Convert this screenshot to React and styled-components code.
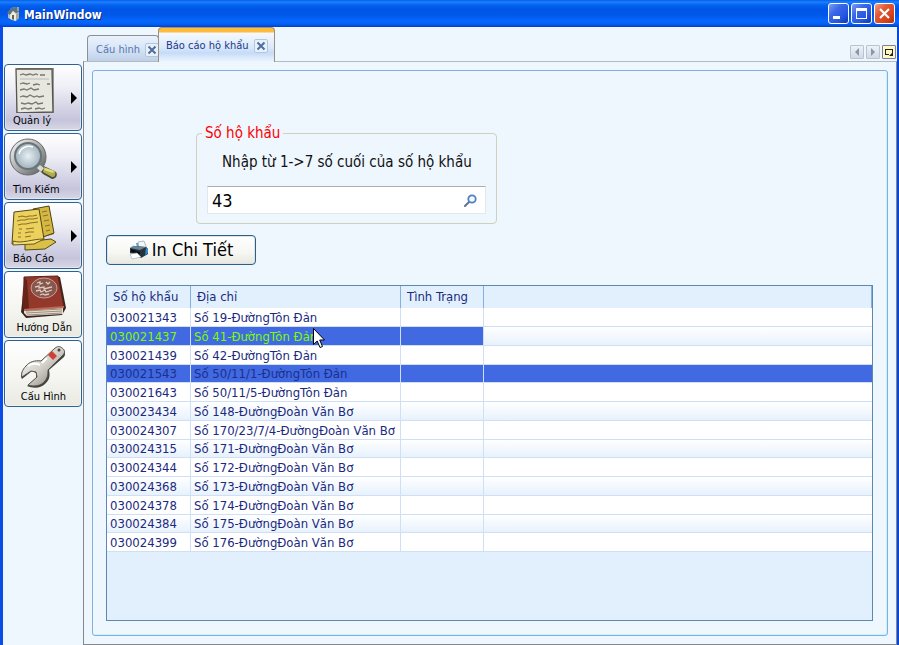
import React, { useState } from "react";
import styled, { createGlobalStyle, css } from "styled-components";

const GlobalStyle = createGlobalStyle`
  *, *::before, *::after { box-sizing: border-box; }
  body { margin: 0; background: #eef6fe; }
  body, button, input {
    font-family: "DejaVu Sans Condensed", Tahoma, "Noto Sans", sans-serif;
    font-size: 13px;
  }
  button, input { margin: 0; padding: 0; }
  svg { display: block; flex: none; }
`;

const Window = styled.div`
  min-height: 100vh;
  display: flex;
  flex-direction: column;
`;

const TitleBar = styled.header`
  height: 27px;
  flex: none;
  display: flex;
  align-items: center;
  gap: 4px;
  padding: 0 4px 0 7px;
  background: linear-gradient(#0a5ce8 0, #1a80ff 2px, #0463f0 5px, #0055e5 9px, #0058ea 15px, #0568fc 21px, #0660f4 24px, #0140c8 27px);
`;

const Title = styled.h1`
  flex: 1;
  margin: 0;
  padding-top: 2px;
  font-size: 12px;
  line-height: 16px;
  font-weight: 700;
  color: #fff;
  text-shadow: 1px 1px 0 #0a2a80;
`;

const Captions = styled.div`
  display: flex;
  gap: 2px;
`;

const CaptionButton = styled.button`
  width: 21px;
  height: 21px;
  border: 1px solid #fff;
  border-radius: 3px;
  background: ${(p) =>
    p.$close
      ? "linear-gradient(135deg, #f0a088 0, #e25a34 35%, #d8441c 70%, #b03010 100%)"
      : "linear-gradient(135deg, #7c9cf4 0, #3a68e8 35%, #2456e0 70%, #1038b0 100%)"};
`;

const Frame = styled.div`
  flex: 1;
  display: flex;
  border: solid #0446e0;
  border-width: 0 2px 0 3px;
  border-left-color: #0a4ce8;
  background: #eef6fe;
`;

const Sidebar = styled.nav`
  width: 80px;
  flex: none;
  display: flex;
  flex-direction: column;
  gap: 2px;
  padding: 37px 1px 0;
`;

const NavButton = styled.button`
  height: 67px;
  display: grid;
  grid-template-columns: 1fr 6px;
  grid-template-rows: 47px 16px;
  align-items: center;
  padding: 1px 4px;
  border: 1px solid #2f6290;
  border-radius: 4px;
  color: #000;
  font-size: 11px;
  line-height: 16px;
  text-align: left;
  background: ${(p) =>
    p.$menu
      ? "linear-gradient(#fff 0, #eeeef6 35%, #c5c4dc 85%, #d8d8e4 100%)"
      : "linear-gradient(#fff 0, #f4f4f0 60%, #eaeae2 100%)"};
  box-shadow: inset 0 0 0 1px rgba(255, 255, 255, 0.4);
`;

const NavIcon = styled.span`
  grid-row: 1;
  display: flex;
  justify-content: ${(p) => (p.$wide ? "center" : "flex-start")};
  grid-column: ${(p) => (p.$wide ? "1 / 3" : "1")};
`;

const NavArrow = styled.span`
  grid-row: 1 / 3;
  grid-column: 2;
`;

const NavLabel = styled.span`
  grid-row: 2;
  grid-column: ${(p) => (p.$wide ? "1 / 3" : "1")};
  padding: ${(p) => (p.$wide ? `0 ${p.$inset}px 0 0` : "0 0 0 4px")};
  text-align: ${(p) => (p.$wide ? "right" : "left")};
  white-space: nowrap;
`;

const Workspace = styled.main`
  flex: 1;
  min-width: 0;
  display: flex;
  flex-direction: column;
`;

const TabStrip = styled.div`
  height: 35px;
  display: flex;
  align-items: flex-end;
  padding-left: 4px;
`;

const Tab = styled.div`
  display: flex;
  align-items: center;
  gap: 5px;
  border: 1px solid #8c8f94;
  border-bottom: 0;
  border-radius: 4px 4px 0 0;
  ${(p) =>
    p.$active
      ? css`
          height: 35px;
          width: 117px;
          padding: 4px 7px 2px;
          color: #1a3a8c;
          border-color: #9a8f80;
          background: linear-gradient(#ffbb3c 0, #ffbb3c 4px, #f4f9ff 5px, #dce9fa 19px, #c6dbf8 25px, #eef6fe 34px);
          z-index: 1;
        `
      : css`
          height: 27px;
          width: 72px;
          margin-right: -1px;
          padding: 1px 1px 0 8px;
          color: #5577ae;
          background: linear-gradient(#eaf2fc 0, #dce8f8 40%, #bccfe8 100%);
        `}
`;

const TabLabel = styled.span`
  flex: 1;
  font-size: 11px;
  line-height: 16px;
  white-space: nowrap;
`;

const TabClose = styled.button`
  width: 14px;
  height: 14px;
  flex: none;
  display: grid;
  place-items: center;
  border: 1px solid #b4c6dc;
  border-radius: 2px;
  background: #e8f1fb;
`;

const StripTools = styled.div`
  margin-left: auto;
  display: flex;
  gap: 2px;
  padding: 0 1px 3px 0;
`;

const StripButton = styled.button`
  width: 14px;
  height: 14px;
  display: grid;
  place-items: center;
  border: 1px solid ${(p) => (p.$hot ? "#7480a8" : "#b8c4d4")};
  border-radius: 1px;
  background: ${(p) => (p.$hot ? "#fff8c4" : "linear-gradient(#eef2f8, #d2dae4)")};
`;

const TabPanel = styled.section`
  flex: 1;
  display: flex;
  margin-top: -1px;
  padding: 8px;
  border: 1px solid #85888c;
  border-top-color: #b4bac2;
`;

const Report = styled.div`
  flex: 1;
  min-width: 0;
  display: flex;
  flex-direction: column;
  align-items: flex-start;
  padding: 53px 14px 14px 13px;
  border: 1px solid #82aee0;
  border-radius: 3px;
  box-shadow: inset -1px -1px 0 #c4f4fc;
`;

const SearchGroup = styled.fieldset`
  width: 301px;
  height: 100px;
  margin: 0 0 11px 90px;
  padding: 9px 10px;
  border: 1px solid #d0d0bf;
  border-radius: 4px;
`;

const Legend = styled.legend`
  margin-left: -5px;
  padding: 0 3px;
  font-size: 15px;
  line-height: 18px;
  color: #f00;
`;

const SearchLabel = styled.label`
  display: block;
  height: 35px;
  padding-left: 15px;
  font-size: 15px;
  line-height: 22px;
  white-space: nowrap;
  color: #101010;
`;

const SearchBox = styled.div`
  height: 28px;
  display: flex;
  align-items: center;
  padding-right: 8px;
  border: 1px solid #e2e9ee;
  border-top-color: #abadb3;
  background: #fff;
`;

const SearchInput = styled.input`
  flex: 1;
  min-width: 0;
  height: 26px;
  padding: 0 4px;
  border: 0;
  outline: 0;
  background: none;
  color: #000;
  font-size: 18px;
`;

const SearchButton = styled.button`
  border: 0;
  background: none;
`;

const PrintButton = styled.button`
  width: 150px;
  height: 30px;
  display: flex;
  align-items: center;
  justify-content: center;
  gap: 3px;
  margin-bottom: 20px;
  border: 1px solid #2c6088;
  border-radius: 4px;
  background: linear-gradient(#fff, #f6f6f2 60%, #e8e8e0);
  box-shadow: inset 0 0 0 1px #dce4e8;
  color: #000;
  font-size: 18px;
  line-height: 24px;
`;

const GridView = styled.div`
  flex: 1;
  align-self: stretch;
  border: 1px solid #5c88b4;
  background: #e2f0fd;
`;

const Table = styled.table`
  width: 100%;
  table-layout: fixed;
  border-collapse: separate;
  border-spacing: 0;
  color: #1b2a80;
`;

const HeadCell = styled.th`
  width: ${(p) => (p.$width ? `${p.$width}px` : "auto")};
  height: 22px;
  padding: 0 6px;
  border-right: 1px solid #84b0e0;
  font-weight: 400;
  line-height: 16px;
  text-align: left;
  white-space: nowrap;
  background: #e2f0fd;
`;

const Row = styled.tr`
  height: 19px;
  background: #fff;
  &:nth-child(4n) { height: 18px; }
  &:nth-child(even) { background: linear-gradient(#fff, #e6f1fc); }
`;

const Cell = styled.td`
  position: relative;
  padding: 0 3px;
  border: solid #cfdff5;
  border-width: 0 1px 1px 0;
  line-height: 17px;
  white-space: nowrap;
  color: ${(p) => (p.$hover ? "#7cfc00" : p.$selected ? "#1c2f8c" : "#1b2a80")};
  background: ${(p) => (p.$selected || p.$hover ? "#4169e1" : "none")};
  background-clip: padding-box;
  &:last-child { border-right: 0; }
`;

const Pointer = styled.svg`
  position: absolute;
  left: 122px;
  top: 1px;
  z-index: 2;
  pointer-events: none;
`;

function HouseIcon() {
  return (
    <svg width="13" height="16" viewBox="0 0 13 16">
      <path d="M1 8 4 2 9 1 12 6V12L8 15 1 12Z" fill="#b7b9b5" />
      <path d="M0 7 4 2 9 1 12 6 9 7 6 5 3 9Z" fill="#587486" />
      <path d="M3 9 6 5 9 8V15L3 13Z" fill="#ece9df" />
      <path d="M9 8 12 7V12L9 15Z" fill="#a9a797" />
      <path d="M5 9H7V14L5 13Z" fill="#606458" />
      <path d="M10 1H12V5H10Z" fill="#9ba09f" />
    </svg>
  );
}

function NoteIcon() {
  return (
    <svg width="46" height="46" viewBox="0 0 46 46">
      <path d="M8 1H45V46L7 47Z" fill="#9a9a94" />
      <path d="M7 2H43L44 45 8 46Z" fill="#e7e7df" stroke="#56564f" strokeWidth="1.3" />
      <g fill="none" stroke="#77776f" strokeWidth="1.3">
        <path d="m11 8 3-1 3 1 4-1 3 1 3-1 2 1M31 8h5" />
        <path d="M11 12h29" strokeWidth=".7" stroke="#aaa" />
        <path d="m11 17 3-1 4 1 3-1M24 18l4-1 3 1M38 17h3" />
        <path d="m11 23 4-1 3 1 4-2 3 2 5-1" />
        <path d="m11 30 3-1 4 1 3-2 4 2 3-1 2 1 5-1" />
        <path d="m12 36 4 1 3-1 4 1 4-2 2 2 5-1" />
        <path d="m12 42 4-1 3 1 4-1M26 42l4-1 3 1 3-1" />
      </g>
    </svg>
  );
}

function MagnifierIcon() {
  return (
    <svg width="50" height="46" viewBox="0 0 50 46">
      <defs>
        <linearGradient id="rim" x1="0" y1="0" x2="1" y2="1">
          <stop stopColor="#fff" />
          <stop offset=".55" stopColor="#a1a5a4" />
          <stop offset="1" stopColor="#505755" />
        </linearGradient>
        <radialGradient id="lens">
          <stop stopColor="#e6eff4" />
          <stop offset="1" stopColor="#a2b2bc" />
        </radialGradient>
      </defs>
      <path d="m30 28 9 4 8 4c2 3 0 7-4 7l-9-5-7-7Z" fill="#464a36" />
      <path d="m35 31 11 4c1 4 0 6-3 6l-9-5Z" fill="#b1ad4e" />
      <path d="m36 32 9 3-1 2-9-3Z" fill="#e1dd82" />
      <ellipse cx="19" cy="21" rx="18" ry="18" fill="url(#rim)" stroke="#676b6b" />
      <ellipse cx="19" cy="20" rx="13" ry="13" fill="url(#lens)" stroke="#68747a" strokeWidth="2" />
      <path d="M10 18c1-6 8-9 14-7" stroke="#fff" strokeWidth="1.5" fill="none" />
      <path d="m31 29 4 3-3 4-4-4Z" fill="#d6d9d5" />
    </svg>
  );
}

function StickyNotesIcon() {
  return (
    <svg width="50" height="46" viewBox="0 0 50 46">
      <path d="m25 5 15-4 5 28-14 4Z" fill="#655519" />
      <path d="m24 4 16-3 5 27-14 5Z" fill="#d5b842" stroke="#53461d" />
      <path d="m16 37 26-3 5 3-11 7-20 1Z" fill="#dbc047" stroke="#514719" />
      <path d="m5 7 25-3 5 30-9 3-23 2Z" fill="#ecd15c" stroke="#514719" />
      <path d="M4 36c10 3 18-2 31-2l-10 5L4 40Z" fill="#f5df73" stroke="#675720" />
      <g fill="none" stroke="#897328" strokeWidth="1.2">
        <path d="m9 12 4-1 4 1 3-1 4 0 4-1M8 16l4-1 4 0 3-1 5 0 5-1M9 20l4-1 4 0 4-1 8-1" />
        <path d="M10 24h3M17 24l8-1M9 28h3M16 28l4-1 5 0M9 32h3M16 32l6-1" />
        <path d="m33 7 5-1M34 11l5-1M35 16l5-1M36 21l5-1M37 26l4-1" />
      </g>
    </svg>
  );
}

function BookIcon() {
  return (
    <svg width="48" height="46" viewBox="0 0 48 46">
      <path d="m6 4 35-1 6 31-4 7-36 3-5-6Z" fill="#39241f" />
      <path d="m5 35 39-2v7L8 42l-3-3Z" fill="#e5dfd1" />
      <path d="m7 37 36-2M7 39l36-2M8 41l35-2" stroke="#9a9180" />
      <path d="m5 3 34-1 6 31-39 3Z" fill="#93392c" stroke="#572219" />
      <path d="m5 3 3 3 2 28-5 3c-3-8-1-18 0-34Z" fill="#652519" />
      <path d="m5 36 40-3" stroke="#bd6955" strokeWidth="2" />
      <ellipse cx="25" cy="14" rx="13" ry="10" fill="#84584f" stroke="#d09c8e" />
      <g fill="none" stroke="#e0c8bb" strokeWidth="1.3">
        <path d="m18 9 3-1v2l3-1M27 8l2 2 2-2" />
        <path d="m16 13 4-1v2l5-1v2l8-2M17 17l4-1 1 2 4-2 1 2 6-2M21 21l3-1 2 1 4-1" />
      </g>
    </svg>
  );
}

function WrenchIcon() {
  return (
    <svg width="48" height="46" viewBox="0 0 48 46">
      <defs>
        <linearGradient id="steel" x1="0" y1="0" x2="1" y2="1">
          <stop stopColor="#fff" />
          <stop offset=".5" stopColor="#d2d0c8" />
          <stop offset="1" stopColor="#77736b" />
        </linearGradient>
      </defs>
      <path d="M44 7c-2-2-5-2-8 1L22 20c-5-1-12 1-15 5-5 4-6 8-4 11l10-8 4 2v5l-9 8c7 3 15 2 19-3 4-4 4-8 3-13L45 14c2-3 1-6-1-7Z" fill="#45423d" />
      <path d="M43 5c-2-2-5-2-8 1L22 18c-6-1-12 1-15 5-4 4-5 8-4 11l9-6 5 1 1 5-9 8c6 2 13 1 17-4 3-4 3-7 3-11L44 12c3-3 1-6-1-7Z" fill="url(#steel)" stroke="#55514b" />
      <path d="m33 8 5 5-4 4-5-5Z" fill="#cf4138" />
      <circle cx="40" cy="7" r="1.5" fill="#44413c" />
      <path d="m23 20 5-5M9 23c4-3 8-3 12-1" stroke="#fff" strokeWidth="2" fill="none" />
    </svg>
  );
}

function PrinterIcon() {
  return (
    <svg width="20" height="20" viewBox="0 0 20 20">
      <path d="m9 2 6-1 3 8-8 2Z" fill="#f4f7fa" stroke="#9ca9b3" strokeWidth=".8" />
      <path d="M7 3h2l2 8H9Z" fill="#46aae0" />
      <path d="m1 8 5-2 11 1 2 2v5l-7 4L1 13Z" fill="#26333b" />
      <path d="m1 8 5-2 11 1-6 3Z" fill="#70838e" />
      <path d="m2 9 9 3v2L2 12Z" fill="#080f15" />
      <path d="m17 8 2 1v4l-3 2Z" fill="#2493d4" />
      <path d="m1 14 7-1 4 4-9 2Z" fill="#fff" stroke="#a8b4bd" strokeWidth=".7" />
      <path d="M5 5 1 8l3-1Z" fill="#42a5d8" />
    </svg>
  );
}

function SearchIcon() {
  return (
    <svg width="13" height="13" viewBox="0 0 13 13" fill="none">
      <path d="m1 12 4-4" stroke="#5d7193" strokeWidth="2" strokeLinecap="round" />
      <circle cx="8" cy="5" r="3.7" stroke="#4f82c4" strokeWidth="1.8" fill="#f1f8ff" />
    </svg>
  );
}

function CrossIcon() {
  return (
    <svg width="10" height="10" viewBox="0 0 10 10" fill="none">
      <path d="m1.500 1.500 7 7M8.500 1.500l-7 7" stroke="#4d6f9e" strokeWidth="2" />
    </svg>
  );
}

function MenuArrow() {
  return (
    <svg width="6" height="12" viewBox="0 0 6 12">
      <path d="M0 0v12l6-6Z" fill="#000" />
    </svg>
  );
}

const navItems = [
  { label: "Quản lý", Icon: NoteIcon, menu: true },
  { label: "Tìm Kiếm", Icon: MagnifierIcon, menu: true },
  { label: "Báo Cáo", Icon: StickyNotesIcon, menu: true },
  { label: "Hướng Dẫn", Icon: BookIcon, inset: 5 },
  { label: "Cấu Hình", Icon: WrenchIcon, inset: 11 },
];

const records = [
  ["030021343", "Số 19-ĐườngTôn Đản"],
  ["030021437", "Số 41-ĐườngTôn Đản"],
  ["030021439", "Số 42-ĐườngTôn Đản"],
  ["030021543", "Số 50/11/1-ĐườngTôn Đản"],
  ["030021643", "Số 50/11/5-ĐườngTôn Đản"],
  ["030023434", "Số 148-ĐườngĐoàn Văn Bơ"],
  ["030024307", "Số 170/23/7/4-ĐườngĐoàn Văn Bơ"],
  ["030024315", "Số 171-ĐườngĐoàn Văn Bơ"],
  ["030024344", "Số 172-ĐườngĐoàn Văn Bơ"],
  ["030024368", "Số 173-ĐườngĐoàn Văn Bơ"],
  ["030024378", "Số 174-ĐườngĐoàn Văn Bơ"],
  ["030024384", "Số 175-ĐườngĐoàn Văn Bơ"],
  ["030024399", "Số 176-ĐườngĐoàn Văn Bơ"],
];

const hoveredId = "030021437";

export default function App() {
  const [query, setQuery] = useState("43");
  const [selectedId, setSelectedId] = useState("030021543");

  return (
    <Window>
      <GlobalStyle />
      <TitleBar>
        <HouseIcon />
        <Title>MainWindow</Title>
        <Captions>
          <CaptionButton aria-label="Minimize">
            <svg width="19" height="19" viewBox="0 0 19 19">
              <path d="M4 12h7v3H4Z" fill="#fff" />
            </svg>
          </CaptionButton>
          <CaptionButton aria-label="Maximize">
            <svg width="19" height="19" viewBox="0 0 19 19">
              <path d="M4 4h11v11H4ZM5 7v7h9V7Z" fill="#fff" fillRule="evenodd" />
            </svg>
          </CaptionButton>
          <CaptionButton $close aria-label="Close">
            <svg width="19" height="19" viewBox="0 0 19 19">
              <path d="m5 5 9 9M14 5l-9 9" stroke="#fff" strokeWidth="2.2" />
            </svg>
          </CaptionButton>
        </Captions>
      </TitleBar>

      <Frame>
        <Sidebar>
          {navItems.map(({ label, Icon, menu, inset }) => (
            <NavButton key={label} $menu={menu}>
              <NavIcon $wide={!menu}>
                <Icon />
              </NavIcon>
              {menu && (
                <NavArrow>
                  <MenuArrow />
                </NavArrow>
              )}
              <NavLabel $wide={!menu} $inset={inset}>{label}</NavLabel>
            </NavButton>
          ))}
        </Sidebar>

        <Workspace>
          <TabStrip role="tablist">
            <Tab role="tab" aria-selected="false">
              <TabLabel>Cấu hình</TabLabel>
              <TabClose aria-label="Đóng Cấu hình"><CrossIcon /></TabClose>
            </Tab>
            <Tab role="tab" aria-selected="true" $active>
              <TabLabel>Báo cáo hộ khẩu</TabLabel>
              <TabClose aria-label="Đóng Báo cáo hộ khẩu"><CrossIcon /></TabClose>
            </Tab>
            <StripTools>
              <StripButton aria-label="Previous">
                <svg width="4" height="8" viewBox="0 0 4 8"><path d="M4 0v8L0 4Z" fill="#8796a8" /></svg>
              </StripButton>
              <StripButton aria-label="Next">
                <svg width="4" height="8" viewBox="0 0 4 8"><path d="M0 0v8l4-4Z" fill="#8796a8" /></svg>
              </StripButton>
              <StripButton $hot aria-label="Tabs">
                <svg width="10" height="10" viewBox="0 0 10 10">
                  <path d="M1 2h8v5H8V3H2v4h3v1H1Z" fill="#222" />
                  <path d="M5 9h4V5Z" fill="#222" />
                </svg>
              </StripButton>
            </StripTools>
          </TabStrip>

          <TabPanel role="tabpanel">
            <Report>
              <SearchGroup>
                <Legend>Số hộ khẩu</Legend>
                <SearchLabel htmlFor="household">Nhập từ 1-&gt;7 số cuối của số hộ khẩu</SearchLabel>
                <SearchBox>
                  <SearchInput
                    id="household"
                    type="text"
                    value={query}
                    onChange={(e) => setQuery(e.target.value)}
                  />
                  <SearchButton aria-label="Tìm"><SearchIcon /></SearchButton>
                </SearchBox>
              </SearchGroup>

              <PrintButton>
                <PrinterIcon />
                In Chi Tiết
              </PrintButton>

              <GridView>
                <Table>
                  <thead>
                    <tr>
                      <HeadCell $width={84}>Số hộ khẩu</HeadCell>
                      <HeadCell $width={210}>Địa chỉ</HeadCell>
                      <HeadCell $width={83}>Tình Trạng</HeadCell>
                      <HeadCell aria-label="" />
                    </tr>
                  </thead>
                  <tbody>
                    {records.map(([id, address]) => {
                      const state = { $hover: id === hoveredId, $selected: id === selectedId };
                      return (
                        <Row key={id} onClick={() => setSelectedId(id)}>
                          <Cell {...state}>{id}</Cell>
                          <Cell {...state}>
                            {address}
                            {state.$hover && (
                              <Pointer width="12" height="21" viewBox="0 0 12 21">
                                <path
                                  d="M.5.500V16.500L4.200 13 7 19.500 9.500 18.500 6.700 12H11.500Z"
                                  fill="#fff"
                                  stroke="#000"
                                />
                              </Pointer>
                            )}
                          </Cell>
                          <Cell {...state} />
                          <Cell $selected={state.$selected} />
                        </Row>
                      );
                    })}
                  </tbody>
                </Table>
              </GridView>
            </Report>
          </TabPanel>
        </Workspace>
      </Frame>
    </Window>
  );
}
